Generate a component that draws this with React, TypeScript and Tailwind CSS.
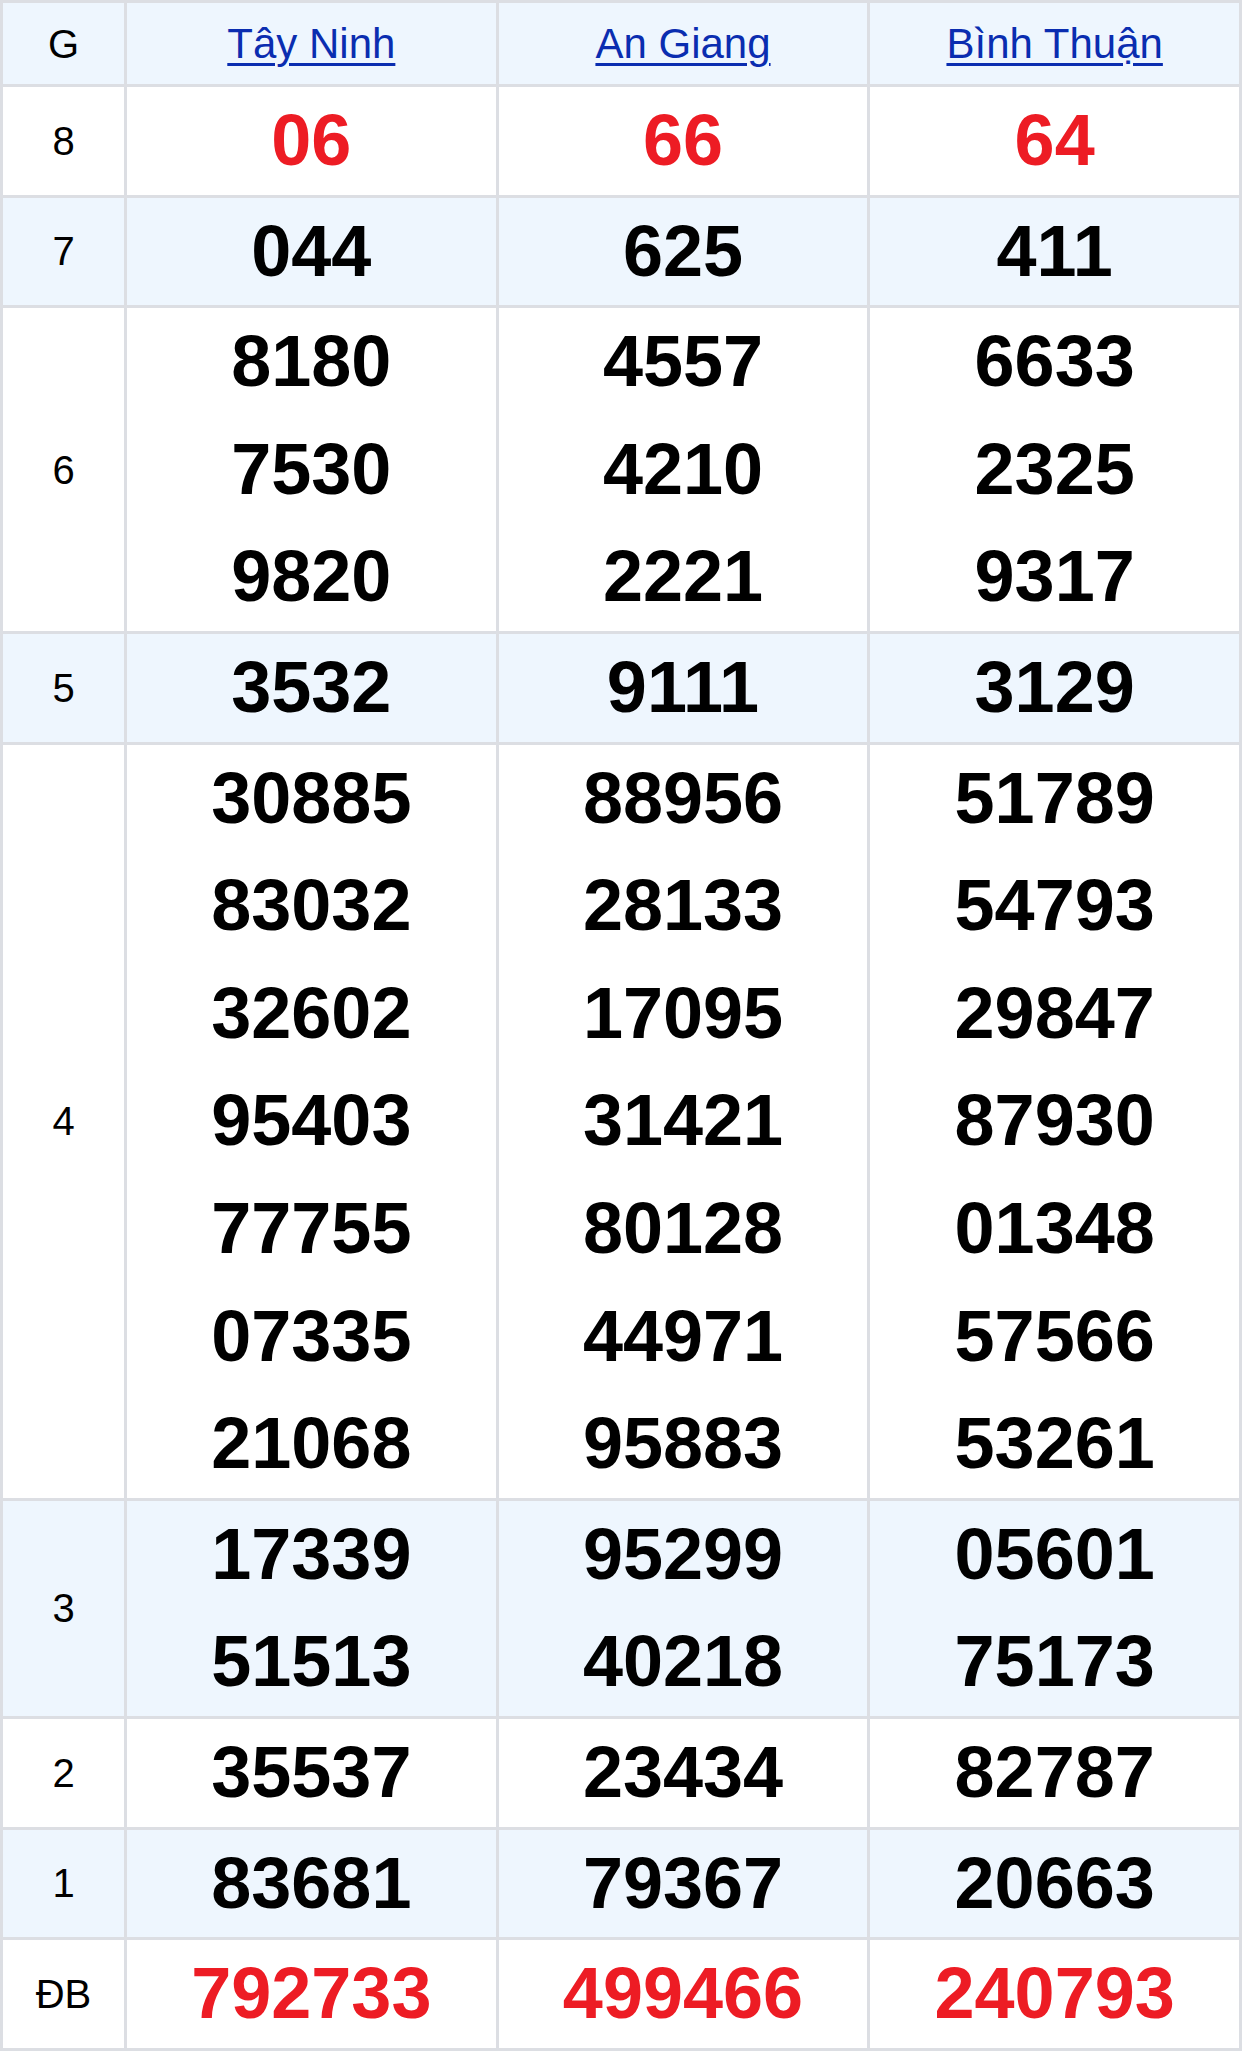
const provinces = ["Tây Ninh", "An Giang", "Bình Thuận"];

type Row = { label: string; values: string[][]; red?: boolean };

const rows: Row[] = [
  { label: "8", values: [["06"], ["66"], ["64"]], red: true },
  { label: "7", values: [["044"], ["625"], ["411"]] },
  {
    label: "6",
    values: [
      ["8180", "7530", "9820"],
      ["4557", "4210", "2221"],
      ["6633", "2325", "9317"],
    ],
  },
  { label: "5", values: [["3532"], ["9111"], ["3129"]] },
  {
    label: "4",
    values: [
      ["30885", "83032", "32602", "95403", "77755", "07335", "21068"],
      ["88956", "28133", "17095", "31421", "80128", "44971", "95883"],
      ["51789", "54793", "29847", "87930", "01348", "57566", "53261"],
    ],
  },
  {
    label: "3",
    values: [
      ["17339", "51513"],
      ["95299", "40218"],
      ["05601", "75173"],
    ],
  },
  { label: "2", values: [["35537"], ["23434"], ["82787"]] },
  { label: "1", values: [["83681"], ["79367"], ["20663"]] },
  { label: "ĐB", values: [["792733"], ["499466"], ["240793"]], red: true },
];

export default function App() {
  return (
    <div className="w-[1242px] bg-white">
      <table className="w-full border-collapse table-fixed">
        <colgroup>
          <col className="w-[124px]" />
          <col />
          <col />
          <col />
        </colgroup>
        <thead>
          <tr className="bg-[#eef6fe]">
            <th className="h-[84px] border-[3px] border-[#dcdee3] font-['Liberation_Sans',Arial,sans-serif] text-[40px] font-normal text-black">
              G
            </th>
            {provinces.map((p) => (
              <th
                key={p}
                className="h-[84px] border-[3px] border-[#dcdee3] font-['Liberation_Sans',Arial,sans-serif] text-[42px] font-normal"
              >
                <a href="#" className="text-[#0a2db0] underline underline-offset-[5px] decoration-[3px]">
                  {p}
                </a>
              </th>
            ))}
          </tr>
        </thead>
        <tbody>
          {rows.map((r, i) => (
            <tr key={r.label} className={i % 2 === 1 ? "bg-[#eef6fe]" : "bg-white"}>
              <td className="border-[3px] border-[#dcdee3] text-center font-['Liberation_Sans',Arial,sans-serif] text-[40px] text-black">
                {r.label}
              </td>
              {r.values.map((col, j) => (
                <td
                  key={j}
                  className={
                    "border-[3px] border-[#dcdee3] p-0 text-center font-['Liberation_Sans',Arial,sans-serif] text-[72px] font-bold " +
                    (r.red ? "text-[#ed1c24]" : "text-black")
                  }
                >
                  {col.map((v) => (
                    <div key={v} className="leading-[107.6px]">
                      {v}
                    </div>
                  ))}
                </td>
              ))}
            </tr>
          ))}
        </tbody>
      </table>
    </div>
  );
}
